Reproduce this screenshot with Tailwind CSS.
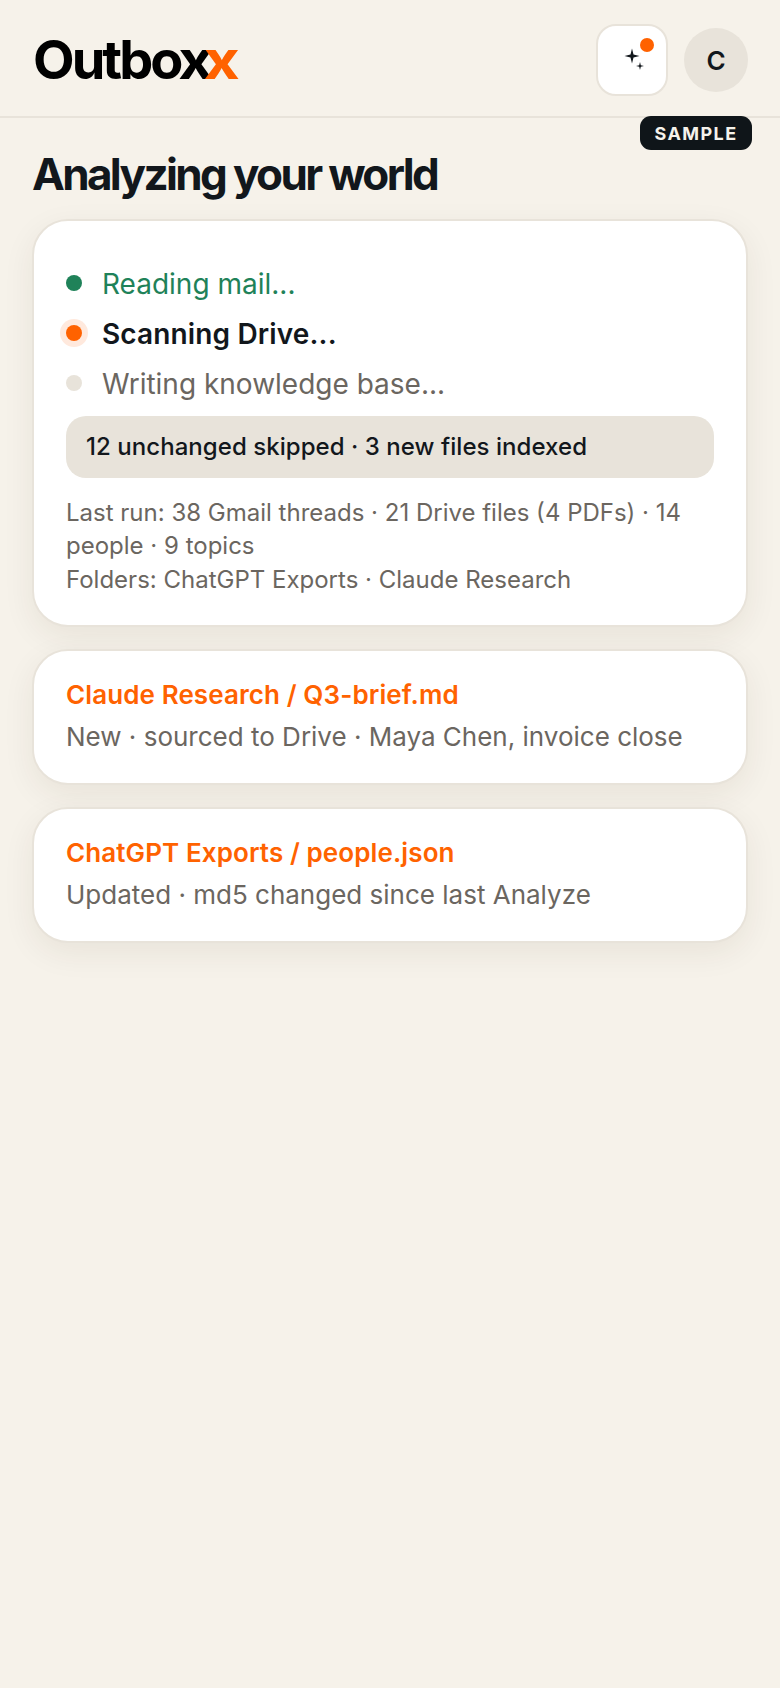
<!doctype html>
<html><head><meta charset="utf-8"><script src="https://cdn.jsdelivr.net/npm/@tailwindcss/browser@4"></script></head>
<body class="bg-[#f6f2ea] font-['Inter',sans-serif] text-[#12171c] w-[780px] h-[1688px] overflow-hidden">
<header class="relative h-[118px] pt-[4px] border-b-2 border-[#e8e3da] flex items-center justify-between pl-[33px] pr-[32px]">
  <div class="text-[54px] font-bold tracking-[-0.055em] text-black leading-none whitespace-nowrap">Outbo<span class="inline-block scale-x-[1.12]">x</span><span class="inline-block scale-x-[1.15] text-[#ff6200] -ml-[3px]">x</span></div>
  <div class="flex items-center gap-4">
    <div class="relative w-[72px] h-[72px] rounded-[20px] bg-white border-2 border-[#e8e3da] flex items-center justify-center">
      <svg width="30" height="30" viewBox="0 0 30 30"><path d="M15 3.5 L16.5 9.5 L22.5 11 L16.5 12.5 L15 18.5 L13.5 12.5 L7.5 11 L13.5 9.5 Z" fill="#12171c"/><path d="M23 17 L23.8 20.2 L27 21 L23.8 21.8 L23 25 L22.2 21.8 L19 21 L22.2 20.2 Z" fill="#12171c"/></svg>
      <span class="absolute top-[12px] right-[12px] w-[14px] h-[14px] rounded-full bg-[#ff6200]"></span>
    </div>
    <div class="w-16 h-16 rounded-full bg-[#e8e3da] flex items-center justify-center text-[26px] font-semibold">C</div>
  </div>
  <span class="absolute right-[28px] top-[116px] h-[34px] w-[112px] justify-center rounded-[11px] bg-[#0f1519] text-[#f5f2eb] text-[18px] font-bold tracking-[0.08em] flex items-center">SAMPLE</span>
</header>
<main class="px-[32px]">
  <h1 class="mt-[28px] text-[44px] leading-[56px] font-bold tracking-[-0.06em]">Analyzing your world</h1>
  <section class="mt-[17px] h-[408px] rounded-[36px] bg-white border-2 border-[#e8e3da] shadow-[0_10px_32px_rgba(60,45,20,0.07)] px-[32px] pt-[45px]">
    <div class="flex flex-col gap-[14px]">
      <div class="flex items-center gap-[20px] h-[36px] text-[28px] text-[#1f8259]"><span class="w-4 h-4 -mt-[3px] rounded-full bg-[#1f8259] shrink-0"></span>Reading mail...</div>
      <div class="flex items-center gap-[20px] h-[36px] text-[28px] font-semibold tracking-[0.005em]"><span class="w-4 h-4 -mt-[3px] rounded-full bg-[#ff6200] shadow-[0_0_0_6px_#ffe9dd] shrink-0"></span>Scanning Drive...</div>
      <div class="flex items-center gap-[20px] h-[36px] text-[28px] text-[#6b6660]"><span class="w-4 h-4 -mt-[3px] rounded-full bg-[#e8e3da] shrink-0"></span>Writing knowledge base...</div>
    </div>
    <div class="mt-[14px] h-[62px] rounded-[20px] bg-[#e8e3da] px-5 flex items-center text-[24px] font-medium tracking-[0.05px]">12 unchanged skipped · 3 new files indexed</div>
    <p class="mt-[18px] text-[24px] leading-[33.4px] text-[#6b6660]">Last run: 38 Gmail threads · 21 Drive files (4 PDFs) · 14 people · 9 topics<br>Folders: ChatGPT Exports · Claude Research</p>
  </section>
  <section class="mt-[22px] h-[136px] rounded-[36px] bg-white border-2 border-[#e8e3da] shadow-[0_10px_32px_rgba(60,45,20,0.07)] px-[32px] pt-[26px]">
    <div class="text-[26px] leading-[36px] font-semibold tracking-[0.1px] text-[#ff6200]">Claude Research / Q3-brief.md</div>
    <div class="mt-[6px] text-[26px] leading-[36px] text-[#6b6660]">New · sourced to Drive · Maya Chen, invoice close</div>
  </section>
  <section class="mt-[22px] h-[136px] rounded-[36px] bg-white border-2 border-[#e8e3da] shadow-[0_10px_32px_rgba(60,45,20,0.07)] px-[32px] pt-[26px]">
    <div class="text-[26px] leading-[36px] font-semibold tracking-[0.1px] text-[#ff6200]">ChatGPT Exports / people.json</div>
    <div class="mt-[6px] text-[26px] leading-[36px] text-[#6b6660]">Updated · md5 changed since last Analyze</div>
  </section>
</main>
</body></html>
